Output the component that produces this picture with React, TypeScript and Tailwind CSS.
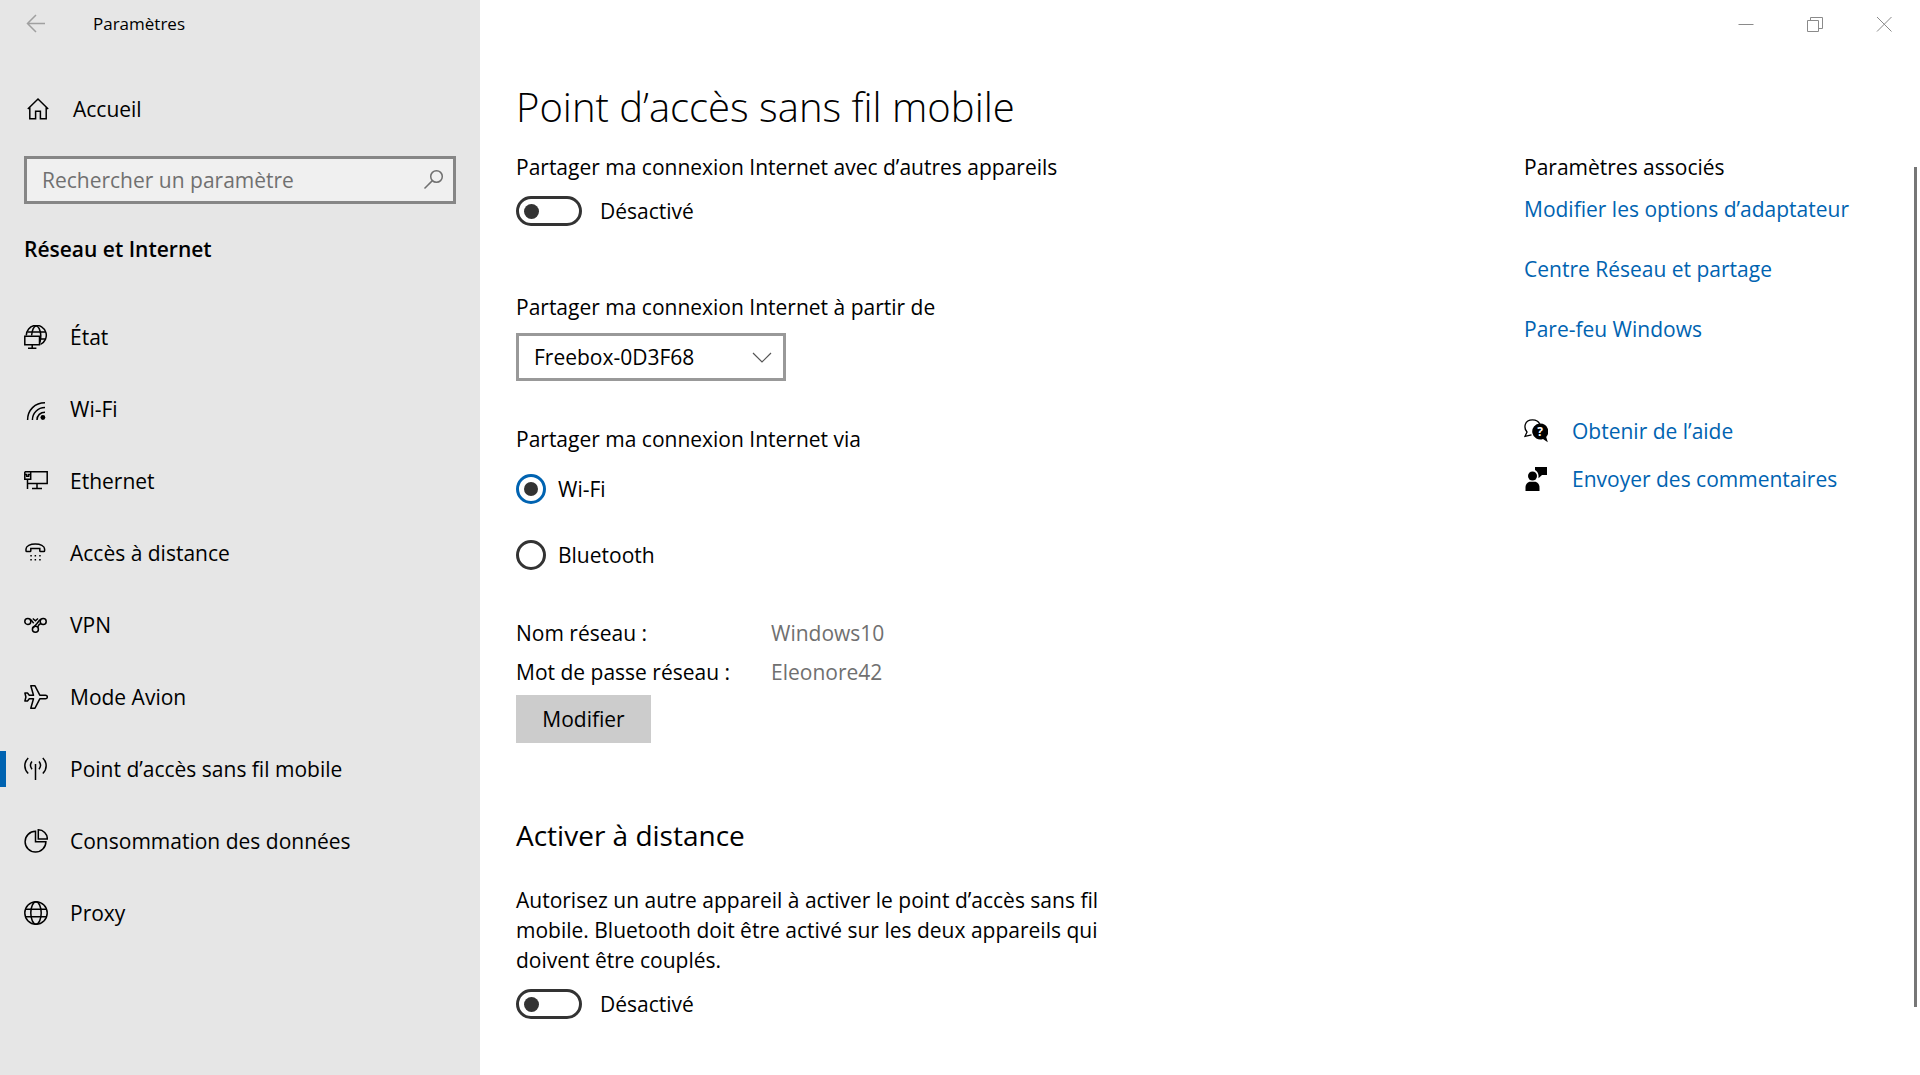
import { ReactNode, useState } from "react";

type IconProps = {
  children: ReactNode;
  className?: string;
};

const Icon = ({ children, className = "" }: IconProps) => (
  <svg
    className={`size-6 shrink-0 ${className}`}
    viewBox="0 0 24 24"
    fill="none"
    stroke="currentColor"
    strokeWidth={1.5}
    aria-hidden="true"
  >
    {children}
  </svg>
);

const StatusIcon = () => (
  <Icon>
    <path d="M2.3 10.5a10 10 0 1 1 14.2 8.9" />
    <path d="M7.6 10.5C8 5 10 .9 12.2.9s4.3 4.2 4.6 9.6c0 3-.3 5-.9 7" />
    <path d="M3.5 7h17.6M16 14h5.6" />
    <path d="M.8 11.2h14.7v8.6H.8zM8.2 20v3M4 23.2h8.4" />
  </Icon>
);

const WifiIcon = () => (
  <Icon>
    <path d="M3.6 23C3.6 13 11 5.8 21 5.8M8.4 23c0-7 5.4-12.4 12.6-12.4M13 23c0-4.6 3.4-7.8 8-7.8" />
    <circle cx="18.9" cy="20.5" r="2.4" fill="currentColor" stroke="none" />
  </Icon>
);

const EthernetIcon = () => (
  <Icon>
    <path d="M.8 2.8h22.4v11.7H3.5M.8 2.8v7.4h5.9V2.8M3.5 10.2V20M13 14.5v5M8 19.5h10" />
    <path d="M.8 5.5h1.9v1.8h2V5.5h2" />
  </Icon>
);

const DialUpIcon = () => (
  <Icon>
    <path d="M2 9.7V8c0-3 4.3-5 9.3-5s9.3 2 9.3 5v1.7c0 .5-.3.8-.8.8h-3.2c-.5 0-.8-.3-.8-.8V7.6H6.8v2.1c0 .5-.3.8-.8.8H2.8c-.5 0-.8-.3-.8-.8z" />
    <path d="M6.3 14.7h1.5M10.6 14.7h1.5M15.2 14.7h1.5M6.3 18.8h1.5M10.6 18.8h1.5M15.2 18.8h1.5" />
  </Icon>
);

const VpnIcon = () => (
  <Icon>
    <circle cx="3.8" cy="8.4" r="3" />
    <circle cx="19.2" cy="8.4" r="3" />
    <circle cx="11.4" cy="16.3" r="3" />
    <path d="M17 6.300c-1.500.6-2.500 2-4 4.200l-4 4.500M5.800 6.300c1.700.8 2.700 2.400 3.900 4M17 10.500c-1.500.3-2.600 1.500-3.300 3.500" />
    <path d="M8.800 5.500l2.600 2.200L14 5.500" />
  </Icon>
);

const PlaneIcon = () => (
  <Icon>
    <path
      d="M21.5 10.2h-5.7L11 .8H6.8l2.7 9.4H5.3L3.5 8H.9l1 4-1 4h2.6l1.8-2.2h4.2L6.8 23.2H11l4.8-9.4h5.7a1.8 1.8 0 0 0 0-3.6z"
      strokeLinejoin="round"
    />
  </Icon>
);

const HotspotIcon = () => (
  <Icon>
    <path d="M11.5 7v16M8 4.5c-1.800 2.200-1.800 5.500 0 7.800M15 4.500c1.800 2.200 1.800 5.500 0 7.800M4.200 1C-.3 5.500-.3 12 4.200 16.500M18.800 1c4.500 4.500 4.500 11 0 15.500" />
  </Icon>
);

const DataUsageIcon = () => (
  <Icon>
    <path d="M11.500 2.300A10.400 10.400 0 1 0 21.900 12.700H11.500z" />
    <path d="M14.300.8a9 9 0 0 1 9 9.100h-9z" />
  </Icon>
);

const GlobeIcon = () => (
  <Icon>
    <circle cx="12" cy="12" r="11.2" />
    <ellipse cx="12" cy="12" rx="5.2" ry="11.2" />
    <path d="M1.500 8.300h21M1.500 15.700h21" />
  </Icon>
);

const HomeIcon = () => (
  <Icon>
    <path d="M.8 12L11 2l10.200 10M2.800 10.400v11.300h5.800v-7.500h4.800v7.500h5.800V10.400" />
  </Icon>
);

const HelpIcon = () => (
  <Icon>
    <path
      d="M7.500 15.900L1 17.300l2-4.300C-.5 9 .2.8 8.500.8c3.800 0 6.200 1.600 7.200 4.200"
      strokeWidth={1.3}
    />
    <path
      d="M16 4.500a8 8 0 1 0 3 15.500l4.800 3.300-1.600-5.400A8 8 0 0 0 16 4.500z"
      fill="currentColor"
      stroke="none"
    />
    <text
      x="16"
      y="17"
      textAnchor="middle"
      className="fill-white stroke-none text-[12px] font-bold"
    >
      ?
    </text>
  </Icon>
);

const FeedbackIcon = () => (
  <Icon>
    <g fill="currentColor" stroke="none">
      <circle cx="8.500" cy="9" r="4.500" />
      <path d="M1.500 24v-3.500c0-3.300 2-5.800 5-5.800h4c3 0 5 2.500 5 5.800V24z" />
      <path d="M11 0h12v8h-5l-3.500 3.300V8.500C14.300 6 13 4 11 3z" />
    </g>
  </Icon>
);

const navItems = [
  { label: "État", icon: <StatusIcon /> },
  { label: "Wi-Fi", icon: <WifiIcon /> },
  { label: "Ethernet", icon: <EthernetIcon /> },
  { label: "Accès à distance", icon: <DialUpIcon /> },
  { label: "VPN", icon: <VpnIcon /> },
  { label: "Mode Avion", icon: <PlaneIcon /> },
  { label: "Point d’accès sans fil mobile", icon: <HotspotIcon /> },
  { label: "Consommation des données", icon: <DataUsageIcon /> },
  { label: "Proxy", icon: <GlobeIcon /> },
];

const relatedLinks = [
  "Modifier les options d’adaptateur",
  "Centre Réseau et partage",
  "Pare-feu Windows",
];

const Sidebar = () => {
  const [active, setActive] = useState("Point d’accès sans fil mobile");

  return (
    <aside className="w-1/4 shrink-0 bg-[#e6e6e6]">
      <div className="flex h-12 items-center pl-6">
        <button className="text-[#a0a0a0]" aria-label="Retour">
          <Icon>
            <path d="M21 11.500H3.500M12 3l-8.500 8.500L12 20" />
          </Icon>
        </button>
        <span className="ml-[45px] text-[17px]">Paramètres</span>
      </div>
      <a href="#accueil" className="mt-[46px] flex items-center gap-[22px] pl-[27px]">
        <HomeIcon />
        Accueil
      </a>
      <div className="relative mx-6 mt-8">
        <input
          className="h-12 w-full border-3 border-[#868686] bg-[#f0f0f0] pr-12 pl-[15px] placeholder:text-[#707070] focus:outline-none"
          type="search"
          aria-label="Rechercher un paramètre"
          placeholder="Rechercher un paramètre"
        />
        <Icon className="absolute top-3 right-2.5 text-[#707070]">
          <circle cx="14.500" cy="8.500" r="5.800" />
          <path d="M10.400 12.600L2.500 20.500" />
        </Icon>
      </div>
      <h2 className="mt-[30px] ml-6 font-semibold">Réseau et Internet</h2>
      <nav className="mt-[37px]">
        {navItems.map(({ label, icon }) => (
          <button
            key={label}
            className="flex h-[72px] w-full items-center text-left"
            onClick={() => setActive(label)}
          >
            <span
              className={
                active === label ? "h-9 w-1.5 bg-[#0063b1]" : "h-9 w-1.5"
              }
            />
            <span className="ml-[18px] flex items-center gap-[22px]">
              {icon}
              {label}
            </span>
          </button>
        ))}
      </nav>
    </aside>
  );
};

const Toggle = ({ label }: { label: string }) => {
  const [on, setOn] = useState(false);

  return (
    <label className="mt-3.5 flex w-fit items-center gap-[18px]">
      <input
        className="flex h-[30px] w-[66px] appearance-none items-center rounded-full border-3 border-[#333] px-[5px] before:size-[15px] before:rounded-full before:bg-[#333] checked:justify-end checked:border-[#0063b1] checked:bg-[#0063b1] checked:before:bg-white"
        type="checkbox"
        role="switch"
        aria-label={label}
        checked={on}
        onChange={() => setOn(!on)}
      />
      {on ? "Activé" : "Désactivé"}
    </label>
  );
};

const ShareVia = () => {
  const [via, setVia] = useState("Wi-Fi");

  return (
    <fieldset className="mt-[43px]">
      <legend>Partager ma connexion Internet via</legend>
      <div className="mt-5 flex flex-col gap-9">
        {["Wi-Fi", "Bluetooth"].map((name) => (
          <label key={name} className="flex w-fit items-center gap-3">
            <input
              className="flex size-[30px] appearance-none items-center justify-center rounded-full border-3 border-[#333] before:size-3.5 before:rounded-full checked:border-[#0063b1] checked:before:bg-[#333]"
              type="radio"
              name="via"
              checked={via === name}
              onChange={() => setVia(name)}
            />
            {name}
          </label>
        ))}
      </div>
    </fieldset>
  );
};

const WindowControls = () => (
  <div className="flex h-12 justify-end pr-0.5 text-[#8a8a8a]">
    <button className="flex w-[69px] items-center justify-center" aria-label="Réduire">
      <Icon>
        <path d="M4.500 12.500h15" strokeWidth={1} />
      </Icon>
    </button>
    <button className="flex w-[69px] items-center justify-center" aria-label="Restaurer">
      <Icon>
        <path d="M4.500 8.500h11v11h-11zM7.500 8.500v-3h12v11h-4" strokeWidth={1} />
      </Icon>
    </button>
    <button className="flex w-[69px] items-center justify-center" aria-label="Fermer">
      <Icon>
        <path d="M5 5l14.500 14.500M19.500 5L5 19.500" strokeWidth={1} />
      </Icon>
    </button>
  </div>
);

export default function App() {
  return (
    <div className="flex min-h-screen bg-white font-['Open_Sans','Noto_Sans',sans-serif] text-[21px] leading-[30px] text-black">
      <Sidebar />
      <div className="flex min-w-0 flex-1 flex-col">
        <WindowControls />
        <div className="flex flex-1">
          <main className="flex-1 pt-8 pb-14 pl-9">
            <h1 className="text-[40px] leading-[54px] font-light">
              Point d’accès sans fil mobile
            </h1>
            <p className="mt-[18px]">
              Partager ma connexion Internet avec d’autres appareils
            </p>
            <Toggle label="Partager ma connexion Internet" />

            <label className="mt-[66px] block w-fit" htmlFor="source">
              Partager ma connexion Internet à partir de
            </label>
            <div className="relative mt-[11px] w-[270px]">
              <select
                className="h-12 w-full appearance-none border-3 border-[#999] bg-white pr-12 pl-[15px]"
                id="source"
              >
                <option>Freebox-0D3F68</option>
              </select>
              <Icon className="pointer-events-none absolute top-3 right-3 text-[#555]">
                <path d="M3 8l9 9 9-9" strokeWidth={1.2} />
              </Icon>
            </div>

            <ShareVia />

            <dl className="mt-12 grid grid-cols-[255px_auto] justify-start gap-y-[9px]">
              <dt>Nom réseau :</dt>
              <dd className="text-[#707070]">Windows10</dd>
              <dt>Mot de passe réseau :</dt>
              <dd className="text-[#707070]">Eleonore42</dd>
            </dl>
            <button className="mt-2 h-12 w-[135px] bg-[#ccc]">Modifier</button>

            <h2 className="mt-[74px] text-[28px] leading-9">
              Activer à distance
            </h2>
            <p className="mt-8 max-w-[610px]">
              Autorisez un autre appareil à activer le point d’accès sans fil
              mobile. Bluetooth doit être activé sur les deux appareils qui
              doivent être couplés.
            </p>
            <Toggle label="Activer à distance" />
          </main>

          <section className="w-[390px] shrink-0 pt-[104px]">
            <h3>Paramètres associés</h3>
            <ul className="mt-3 flex flex-col gap-[30px] text-[#0063b1]">
              {relatedLinks.map((link) => (
                <li key={link}>
                  <a href="#associes">{link}</a>
                </li>
              ))}
            </ul>
            <a href="#aide" className="mt-[72px] flex w-fit items-center gap-6">
              <HelpIcon />
              <span className="text-[#0063b1]">Obtenir de l’aide</span>
            </a>
            <a
              href="#commentaires"
              className="mt-[18px] flex w-fit items-center gap-6"
            >
              <FeedbackIcon />
              <span className="text-[#0063b1]">Envoyer des commentaires</span>
            </a>
          </section>
          {/* scroll thumb */}
          <div className="mt-[119px] mr-[3px] mb-[68px] w-[3px] bg-[#767676]" />
        </div>
      </div>
    </div>
  );
}
